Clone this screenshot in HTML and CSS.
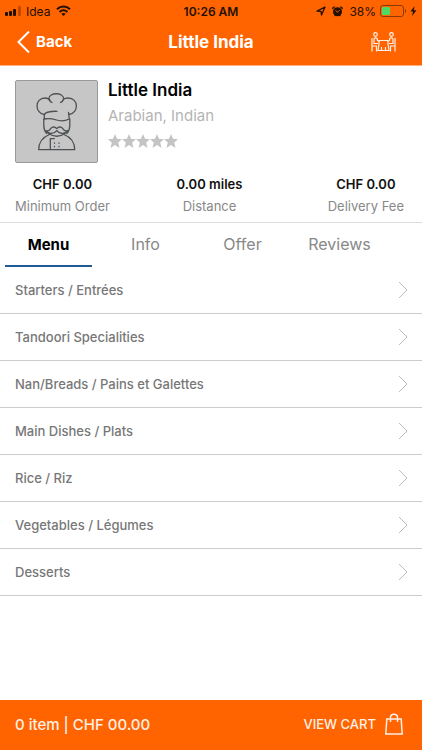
FILE: index.html
```html
<!DOCTYPE html>
<html lang="en">
<head>
    <meta charset="UTF-8">
    <meta name="viewport" content="width=device-width, initial-scale=1.0">
    <title>Little India</title>
    <link rel="stylesheet" href="styles.css">
</head>
<body>
    <header class="header">
        <div class="status-bar">
            <div class="status-left">
                <svg width="17" height="12" viewBox="0 0 17 12">
                    <rect x="0" y="7" width="3" height="4" rx="1"/>
                    <rect x="4" y="6" width="3" height="5" rx="1"/>
                    <rect x="8" y="4" width="3" height="7" rx="1"/>
                    <rect x="13" y="1" width="3" height="10" rx="1" opacity=".3"/>
                </svg>
                <span>Idea</span>
                <svg class="wifi" width="15" height="12" viewBox="0 0 15 12" fill="none" stroke="#241000" stroke-width="2">
                    <path d="M1 4.2C4.8.6 10.2.6 14 4.2"/>
                    <path d="M3.5 7C6 4.8 9 4.8 11.5 7"/>
                    <path d="M5.3 8.8C6.6 7.8 8.4 7.8 9.7 8.8L7.5 11Z" fill="#241000" stroke="none"/>
                </svg>
            </div>
            <span class="time">10:26 AM</span>
            <div class="status-right">
                <svg width="10" height="10" viewBox="0 0 10 10" fill="none" stroke="#241000" stroke-width="1.3" stroke-linejoin="round">
                    <path d="M1 5.2L9 1L5.5 9L5 5.3Z"/>
                </svg>
                <svg class="alarm" width="11" height="11" viewBox="0 0 11 11">
                    <circle cx="5.5" cy="5.8" r="4.5"/>
                    <path d="M.5 3.5A2 2 0 0 1 3.3.8ZM10.5 3.5A2 2 0 0 0 7.7.8ZM2 10.5L3.2 8L4.5 9ZM9 10.5L7.8 8L6.5 9Z"/>
                    <path d="M3.5 4.5L5.5 6.2L7.5 4.2" fill="none" stroke="#ff6400" stroke-width=".9"/>
                </svg>
                <span>38%</span>
                <svg width="26" height="12" viewBox="0 0 26 12">
                    <rect x=".5" y=".5" width="23" height="11" rx="2.5" fill="none" stroke="#8a3a08"/>
                    <rect x="2" y="2" width="8" height="8" rx="1" fill="#4cd964"/>
                    <path d="M25 4V8A2.2 2.2 0 0 0 25 4Z" fill="#8a3a08"/>
                </svg>
                <svg width="7" height="10" viewBox="0 0 7 10">
                    <path d="M4.5 0L.5 5.5H3L2 10L6.5 4.2H3.8Z"/>
                </svg>
            </div>
        </div>
        <div class="nav-bar">
            <button class="back">
                <svg width="13" height="24" viewBox="0 0 13 24" fill="none" stroke="#fff" stroke-width="2">
                    <path d="M12 1.5L1.5 12L12 22.5"/>
                </svg>
                Back
            </button>
            <h1 class="title">Little India</h1>
            <button class="table-button" aria-label="Book a table">
                <svg width="26" height="20" viewBox="0 0 26 20" fill="none" stroke="#fff0e6" stroke-width="1.2">
                    <circle cx="4.5" cy="2.5" r="1.8"/>
                    <circle cx="20.500" cy="2.5" r="1.8"/>
                    <path d="M1 6V19.5M1 14H5.5V19.5M3 12V7.5Q3 5.800 4.800 5.800Q6.500 5.800 6.500 8.500L8.500 9.500M3 11.500H7"/>
                    <path d="M24 6V19.5M24 14H19.500V19.5M22 12V7.5Q22 5.800 20.200 5.800Q18.500 5.800 18.500 8.500L16.500 9.500M22 11.500H18"/>
                    <path d="M8 8.500H17V12L18 18.500H7L8 12ZM10.500 18.500V15M14.500 18.500V15"/>
                </svg>
            </button>
        </div>
    </header>

    <main class="content">
        <section class="restaurant">
            <div class="avatar">
                <svg width="42" height="60" viewBox="0 0 42 60" fill="none" stroke="#4d5154" stroke-width="1.3" stroke-linecap="round" stroke-linejoin="round">
                    <path d="M8.3 22.5C-1.500 21-1.500 6 9 6Q12 6 14 8"/>
                    <path d="M12.800 7C13 0 27.500 0 27.700 7"/>
                    <path d="M12.800 7Q13.500 9.500 16 10.500M27.700 7Q27 9.500 24.500 10.500M27 7.500Q29 6 32 6C43 6 43 21 33 22.5"/>
                    <path d="M8.300 27V23Q9 20.500 12.500 20Q17 19 21 19.300M32.500 20.500L33.300 27M8.300 27Q14 26 20.500 28T33.300 27"/>
                    <path d="M7.800 27V34Q8 39 10.800 41.500M33.800 27V34Q33.500 39 30.800 41.500M12.500 41.500Q20.800 47 29 41.500"/>
                    <path d="M20.800 36.500C17.500 33.500 15.500 35.500 13.500 38Q12 39.500 10 38.500C12 42.500 18.500 42 20.800 38.500C23 42 29.500 42.500 31.500 38.500Q29.500 39.500 28 38C26 35.500 24 33.500 20.800 36.500Z"/>
                    <path d="M13.500 42.500C6 45.500 2.700 51 2.700 57.700H38.700C38.700 51 35.500 45.500 28 42.500M18.300 46.700H14.300V57.700"/>
                    <path d="M18.500 51V51.300M23 51V51.300M18.500 54.500V54.800M23 54.500V54.800"/>
                </svg>
            </div>
            <div class="details">
                <h2 class="name">Little India</h2>
                <p class="cuisine">Arabian, Indian</p>
                <div class="stars" role="img" aria-label="No rating">
                    <svg viewBox="0 0 14 14"><path d="M7 0L9 4.7L14 5.2L10.2 8.5L11.5 14L7 11.1L2.5 14L3.8 8.5L0 5.2L5 4.7Z"/></svg>
                    <svg viewBox="0 0 14 14"><path d="M7 0L9 4.7L14 5.2L10.2 8.5L11.5 14L7 11.1L2.5 14L3.8 8.5L0 5.2L5 4.7Z"/></svg>
                    <svg viewBox="0 0 14 14"><path d="M7 0L9 4.7L14 5.2L10.2 8.5L11.5 14L7 11.1L2.5 14L3.8 8.5L0 5.2L5 4.7Z"/></svg>
                    <svg viewBox="0 0 14 14"><path d="M7 0L9 4.7L14 5.2L10.2 8.5L11.5 14L7 11.1L2.5 14L3.8 8.5L0 5.2L5 4.7Z"/></svg>
                    <svg viewBox="0 0 14 14"><path d="M7 0L9 4.7L14 5.2L10.2 8.5L11.5 14L7 11.1L2.5 14L3.8 8.5L0 5.2L5 4.7Z"/></svg>
                </div>
            </div>
        </section>

        <dl class="stats">
            <div class="stat">
                <dd>CHF 0.00</dd>
                <dt>Minimum Order</dt>
            </div>
            <div class="stat">
                <dd>0.00 miles</dd>
                <dt>Distance</dt>
            </div>
            <div class="stat">
                <dd>CHF 0.00</dd>
                <dt>Delivery Fee</dt>
            </div>
        </dl>

        <nav class="tabs">
            <button class="tab active">Menu</button>
            <button class="tab">Info</button>
            <button class="tab">Offer</button>
            <button class="tab">Reviews</button>
        </nav>

        <ul class="menu">
            <li><a href="#">Starters / Entrées <svg class="chevron" viewBox="0 0 10 18"><path d="M1 1L9 9L1 17"/></svg></a></li>
            <li><a href="#">Tandoori Specialities <svg class="chevron" viewBox="0 0 10 18"><path d="M1 1L9 9L1 17"/></svg></a></li>
            <li><a href="#">Nan/Breads / Pains et Galettes <svg class="chevron" viewBox="0 0 10 18"><path d="M1 1L9 9L1 17"/></svg></a></li>
            <li><a href="#">Main Dishes / Plats <svg class="chevron" viewBox="0 0 10 18"><path d="M1 1L9 9L1 17"/></svg></a></li>
            <li><a href="#">Rice / Riz <svg class="chevron" viewBox="0 0 10 18"><path d="M1 1L9 9L1 17"/></svg></a></li>
            <li><a href="#">Vegetables / Légumes <svg class="chevron" viewBox="0 0 10 18"><path d="M1 1L9 9L1 17"/></svg></a></li>
            <li><a href="#">Desserts <svg class="chevron" viewBox="0 0 10 18"><path d="M1 1L9 9L1 17"/></svg></a></li>
        </ul>
    </main>

    <footer class="cart-bar">
        <span class="total">0 item | CHF 00.00</span>
        <button class="view-cart">
            VIEW CART
            <svg width="18" height="22" viewBox="0 0 18 22" fill="none" stroke="#fff0e6" stroke-width="1.5">
                <path d="M1.8 6H16.2L17.2 21H.8ZM5.5 9V4.5C5.5 0 12.5 0 12.5 4.5V9"/>
            </svg>
        </button>
    </footer>
</body>
</html>
```
FILE: styles.css
```css
* {
    box-sizing: border-box;
    margin: 0;
    padding: 0;
}
body {
    display: flex;
    flex-direction: column;
    min-height: 100vh;
    font-family: Inter, "Liberation Sans", sans-serif;
    background-color: #fff;
}
button {
    border: none;
    background: none;
    font-family: inherit;
    cursor: pointer;
}
svg {
    display: block;
    flex-shrink: 0;
}

/* header */
.header {
    background-color: #ff6400;
    border-bottom: 1px solid #ffb27f;
}
.status-bar {
    display: grid;
    grid-template-columns: 1fr auto 1fr;
    align-items: center;
    height: 22px;
    padding: 0 5px;
    font-size: 12px;
    color: #241000;
    fill: #241000;
}
.status-left,
.status-right {
    display: flex;
    align-items: center;
    gap: 4px;
}
.status-right {
    justify-content: flex-end;
}
.wifi {
    margin-left: 2px;
}
.alarm {
    margin: 0 2px;
}
.time {
    font-weight: 600;
}
.nav-bar {
    display: grid;
    grid-template-columns: 1fr auto 1fr;
    align-items: center;
    height: 43px;
    padding: 0 17px 4px;
    color: #fff;
}
.back {
    display: flex;
    align-items: center;
    gap: 6px;
    font-size: 15px;
    font-weight: 700;
    color: #fff;
}
.title {
    font-size: 17px;
    font-weight: 700;
}
.table-button {
    justify-self: end;
    margin-right: 8px;
}

/* restaurant */
.content {
    flex: 1;
}
.restaurant {
    display: flex;
    gap: 10px;
    padding: 14px 15px 0;
}
.avatar {
    display: flex;
    align-items: center;
    justify-content: center;
    width: 83px;
    height: 83px;
    border: 1px solid #999;
    border-radius: 2px;
    background-color: #c6c6c6;
}
.name {
    font-size: 17px;
    line-height: 20px;
    font-weight: 600;
    color: #000;
}
.cuisine {
    margin-top: 6px;
    font-size: 15px;
    line-height: 20px;
    color: #b4b4b4;
}
.stars {
    display: flex;
    margin-top: 8px;
}
.stars svg {
    width: 14px;
    height: 14px;
    fill: #c4c4c4;
}
.stats {
    display: grid;
    grid-template-columns: 1fr auto 1fr;
    padding: 10px 18px 5px 15px;
    border-bottom: 1px solid #ddd;
    text-align: center;
}
.stat {
    font-size: 13px;
}
.stat:first-child {
    justify-self: start;
}
.stat:last-child {
    justify-self: end;
}
.stat dd {
    line-height: 22px;
    font-weight: 600;
    color: #111;
}
.stat dt {
    line-height: 22px;
    color: #888;
}

/* tabs */
.tabs {
    display: grid;
    grid-template-columns: repeat(4, minmax(0, 1fr));
    gap: 10px;
    padding: 0 39px 0 5px;
}
.tab {
    height: 44px;
    border-bottom: 2px solid transparent;
    font-size: 16px;
    color: #888;
}
.tab.active {
    border-bottom-color: #215a94;
    font-size: 15px;
    font-weight: 700;
    color: #000;
}

/* menu list */
.menu {
    list-style: none;
}
.menu a {
    display: flex;
    align-items: center;
    justify-content: space-between;
    height: 47px;
    padding: 0 14px 0 15px;
    border-bottom: 1px solid #ccc;
    font-size: 13px;
    font-weight: 500;
    color: #777;
    text-decoration: none;
}
.chevron {
    width: 10px;
    height: 18px;
    fill: none;
    stroke: #bbb;
}

/* cart */
.cart-bar {
    display: flex;
    align-items: center;
    justify-content: space-between;
    height: 50px;
    padding: 0 19px 2px 15px;
    background-color: #ff6400;
    color: #fff0e6;
}
.total {
    font-size: 15px;
    font-weight: 500;
}
.view-cart {
    display: flex;
    align-items: center;
    gap: 9px;
    font-size: 13px;
    font-weight: 500;
    color: #fff0e6;
}
```
